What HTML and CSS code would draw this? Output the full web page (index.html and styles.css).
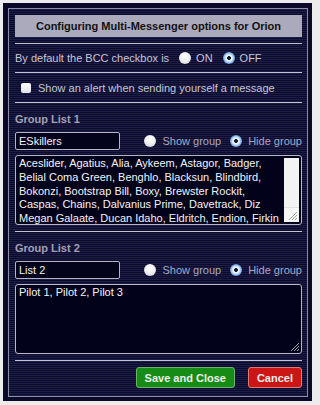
FILE: index.html
```html
<!DOCTYPE html>
<html>
<head>
<meta charset="utf-8">
<link rel="stylesheet" href="styles.css">
</head>
<body>
<div class="frame">
  <div class="panel">
    <div class="title">Configuring Multi-Messenger options for Orion</div>
    <div class="rule"></div>
    <div class="row row-bcc">
      <span>By default the BCC checkbox is</span>
      <label class="opt first"><span class="radio"></span>ON</label>
      <label class="opt"><span class="radio on"></span>OFF</label>
    </div>
    <div class="rule"></div>
    <div class="row row-alert"><span class="check"></span>Show an alert when sending yourself a message</div>
    <div class="rule"></div>
    <section class="group">
      <div class="group-label">Group List 1</div>
      <div class="group-head">
        <input class="name" value="ESkillers">
        <div class="vis">
          <label class="opt"><span class="radio"></span>Show group</label>
          <label class="opt"><span class="radio on"></span>Hide group</label>
        </div>
      </div>
      <div class="area-wrap">
        <textarea class="list scroll">Aceslider, Agatius, Alia, Aykeem, Astagor, Badger, Belial Coma Green, Benghlo, Blacksun, Blindbird, Bokonzi, Bootstrap Bill, Boxy, Brewster Rockit, Caspas, Chains, Dalvanius Prime, Davetrack, Diz Megan Galaate, Ducan Idaho, Eldritch, Endion, Firkin</textarea>
        <div class="track">
          <span class="corner"><svg width="9" height="9" viewBox="0 0 9 9"><path d="M9 1 L1 9 M9 4 L4 9 M9 7 L7 9" stroke="#9a9a9a" stroke-width="0.9" fill="none"/></svg></span>
        </div>
      </div>
    </section>
    <div class="rule"></div>
    <section class="group">
      <div class="group-label">Group List 2</div>
      <div class="group-head">
        <input class="name" value="List 2">
        <div class="vis">
          <label class="opt"><span class="radio"></span>Show group</label>
          <label class="opt"><span class="radio on"></span>Hide group</label>
        </div>
      </div>
      <div class="area-wrap">
        <textarea class="list">Pilot 1, Pilot 2, Pilot 3</textarea>
        <span class="grip"><svg width="9" height="9" viewBox="0 0 9 9"><path d="M9 1 L1 9 M9 4 L4 9 M9 7 L7 9" stroke="#b8b8c4" stroke-width="0.9" fill="none"/></svg></span>
      </div>
    </section>
    <div class="rule"></div>
    <div class="actions">
      <button class="btn save">Save and Close</button>
      <button class="btn cancel">Cancel</button>
    </div>
  </div>
</div>
</body>
</html>
```
FILE: styles.css
```css
html, body {
  margin: 0;
  background: #ececec;
}
body {
  font-family: "Liberation Sans", Arial, sans-serif;
  font-size: 11px;
}
.frame {
  margin: 3px;
  width: 309px;
  height: 398px;
  box-sizing: border-box;
  padding: 5px 4px 4px 5px;
  background: #0a0a28;
}
.panel {
  box-sizing: border-box;
  height: 389px;
  border: 1px solid #8c8ca4;
  padding: 6px 5px 0 6px;
  background: repeating-linear-gradient(to bottom, #1c1c47 0 1px, #0b0b2c 1px 2px);
}
.title {
  height: 22px;
  line-height: 22px;
  text-align: center;
  font-weight: bold;
  background: #aaaabc;
  color: #111;
  margin-bottom: 6px;
}
.rule {
  height: 1px;
  background: #c4c4d0;
}
.row {
  display: flex;
  align-items: center;
  color: #c6c6d4;
}
.row-bcc {
  height: 28px;
}
.row-alert {
  height: 29px;
  padding-left: 6px;
}
.opt {
  display: flex;
  align-items: center;
  gap: 5px;
}
.row-bcc .opt {
  margin-left: 10px;
}
.radio {
  display: inline-block;
  width: 12px;
  height: 12px;
  border-radius: 50%;
  background: radial-gradient(circle at 50% 35%, #ffffff 0, #f1f1f1 45%, #cfcfd4 100%);
}
.radio.on {
  background: radial-gradient(circle at 50% 50%, #141c30 0 1.6px, #eef5ff 2.2px 3px, #a9cdf2 4.4px, #5f93d4 6px);
}
.check {
  display: inline-block;
  width: 10px;
  height: 10px;
  border-radius: 2px;
  background: linear-gradient(#ffffff, #e4e4e8);
  margin-right: 7px;
}
.group {
  padding: 9px 0 6px;
}
.group-label {
  font-weight: bold;
  color: #a2a2b2;
  line-height: 14px;
}
.group-head {
  display: flex;
  align-items: center;
  margin-top: 6px;
  height: 18px;
}
.name {
  box-sizing: border-box;
  width: 105px;
  height: 18px;
  margin: 0;
  background: #03031c;
  border: 1px solid #b4b4c4;
  border-radius: 2px;
  color: #f2f2f6;
  font-family: "Liberation Sans", Arial, sans-serif;
  font-size: 11px;
  padding: 0 3px;
  outline: none;
}
.vis {
  margin-left: auto;
  display: flex;
  gap: 9px;
  color: #a8a8c0;
}
.vis .opt {
  gap: 6px;
}
.area-wrap {
  position: relative;
  margin-top: 5px;
}
.list {
  display: block;
  box-sizing: border-box;
  width: 100%;
  height: 70px;
  margin: 0;
  background: #02021a;
  border: 1px solid #b8b8c8;
  border-radius: 3px;
  color: #f4f4f8;
  font-family: "Liberation Sans", Arial, sans-serif;
  font-size: 11px;
  line-height: 13.75px;
  padding: 1px 3px;
  resize: none;
  outline: none;
  overflow: hidden;
}
.list.scroll {
  padding-right: 20px;
}
.track {
  position: absolute;
  top: 3px;
  bottom: 3px;
  right: 3px;
  width: 15px;
  background: #f3f3f3;
  display: flex;
  align-items: flex-end;
}
.corner {
  width: 15px;
  height: 15px;
  box-sizing: border-box;
  background: #f7f7f7;
  border-top: 1px solid #e0e0e0;
  display: flex;
  align-items: flex-end;
  justify-content: flex-end;
  padding: 0 2px 2px 0;
}
.grip {
  position: absolute;
  right: 3px;
  bottom: 3px;
  width: 9px;
  height: 9px;
  display: flex;
}
.actions {
  display: flex;
  justify-content: flex-end;
  gap: 13px;
  margin-top: 6px;
}
.btn {
  height: 21px;
  padding: 0 8px;
  margin: 0;
  border-radius: 3px;
  font-family: "Liberation Sans", Arial, sans-serif;
  font-weight: bold;
  font-size: 11px;
  color: #eeeeee;
}
.save {
  background: #168c16;
  border: 1px solid #6fb06f;
}
.cancel {
  background: #cc1616;
  border: 1px solid #de7c7c;
}
```
